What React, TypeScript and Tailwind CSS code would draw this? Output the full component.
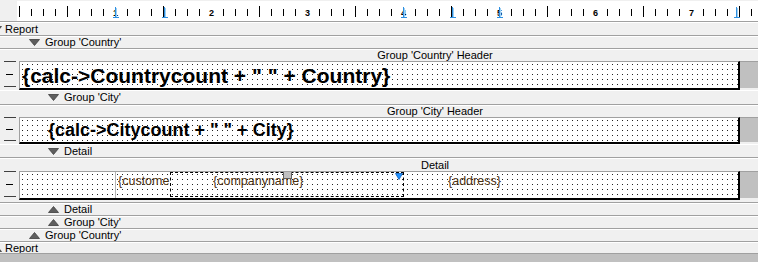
import React from "react";

const markers = [115, 164, 403, 452, 499, 736];

function Ruler() {
  const ticks: React.ReactNode[] = [];
  for (let k = 0; 19 + 12 * k < 758; k++) {
    const x = 19 + 12 * k;
    if (k % 8 === 0 && k > 0) {
      ticks.push(
        <text
          key={k}
          x={x + 0.5}
          y={16}
          textAnchor="middle"
          fontSize="9"
          fontWeight="bold"
          fontFamily="'Liberation Sans', Arial, sans-serif"
          fill="#000"
        >
          {k / 8}
        </text>
      );
    } else if (k % 4 === 0) {
      ticks.push(<rect key={k} x={x} y={6} width={1} height={11} fill="#000" />);
    } else {
      ticks.push(<rect key={k} x={x} y={9} width={1} height={7} fill="#000" />);
    }
  }
  return (
    <svg width="758" height="22" className="block shrink-0" shapeRendering="crispEdges">
      <rect x="0" y="0" width="758" height="22" fill="#f0f0f0" />
      <rect x="17" y="1" width="741" height="20" fill="#fff" />
      <rect x="0" y="21" width="758" height="1" fill="#a0a0a0" />
      {ticks}
      {markers.map((m) => (
        <g key={m}>
          <rect x={m} y={7} width={1} height={10} fill="#2e8fe0" />
          <rect x={m + 1} y={8} width={1} height={9} fill="#9cd0f5" />
          <rect x={m - 2} y={17} width={6} height={1} fill="#2e8fe0" />
        </g>
      ))}
    </svg>
  );
}

function Tri({ up = false }: { up?: boolean }) {
  return (
    <svg width="11" height="7" viewBox="0 0 11 7" className="shrink-0">
      {up ? (
        <polygon points="5.5,0.5 10.5,6.5 0.5,6.5" fill="#5e5e5e" stroke="#3c3c3c" strokeWidth="0.8" />
      ) : (
        <polygon points="0.5,0.5 10.5,0.5 5.5,6.5" fill="#5e5e5e" stroke="#3c3c3c" strokeWidth="0.8" />
      )}
    </svg>
  );
}

function Row({
  h,
  indent,
  up,
  label,
  clipped,
}: {
  h: string;
  indent?: string;
  up?: boolean;
  label: string;
  clipped?: boolean;
}) {
  return (
    <div className={`${h} flex shrink-0 items-center border-t border-white border-b border-b-[#a0a0a0] overflow-hidden leading-none`}>
      {clipped ? (
        <div className="-ml-[9px] flex items-center">
          <Tri up={up} />
        </div>
      ) : (
        <div className={`${indent} flex items-center`}>
          <Tri up={up} />
        </div>
      )}
      <span className={clipped ? "ml-[3px]" : "ml-[5px]"}>{label}</span>
    </div>
  );
}

function Label({ h, text }: { h: string; text: string }) {
  return (
    <div className={`${h} shrink-0 flex items-center justify-center pl-[112px] border-t border-white leading-none`}>
      {text}
    </div>
  );
}

function Gutter() {
  return (
    <div className="w-[19px] shrink-0 flex flex-col items-center justify-between pb-[3px]">
      <div className="h-px w-[12px] bg-[#404040]" />
      <div className="h-px w-[7px] bg-black" />
      <div className="h-px w-[12px] bg-[#404040]" />
    </div>
  );
}

function Band({ h, children }: { h: string; children: React.ReactNode }) {
  return (
    <div className={`${h} shrink-0 flex`}>
      <Gutter />
      <div className="relative flex-1 flex items-center overflow-hidden border-t border-l border-[#a0a0a0] border-b-2 border-b-black border-r-2 border-r-black bg-white bg-[radial-gradient(circle_at_0.5px_0.5px,#222_0.6px,transparent_0.7px)] bg-[length:5px_5px] bg-[position:2px_2px]">
        {children}
      </div>
      <div className="w-[18px] shrink-0 bg-[#c0c0c0] border-t border-[#a0a0a0] mb-[2px]" />
    </div>
  );
}

export default function App() {
  return (
    <div className="w-[758px] h-[262px] overflow-hidden flex flex-col bg-[#f0f0f0] font-['Liberation_Sans',Arial,sans-serif] text-[11px] text-black">
      <Ruler />
      <Row h="h-[14px]" label="Report" clipped />
      <Row h="h-[13px]" indent="ml-[29px]" label="Group 'Country'" />
      <Label h="h-[12px]" text="Group 'Country' Header" />
      <Band h="h-[29px]">
        <span className="pl-[2px] font-bold text-[21px] leading-none whitespace-nowrap">
          {'{calc->Countrycount + " " + Country}'}
        </span>
      </Band>
      <Row h="h-[15px]" indent="ml-[48px]" label="Group 'City'" />
      <Label h="h-[12px]" text="Group 'City' Header" />
      <Band h="h-[27px]">
        <span className="pl-[28px] font-bold text-[18px] leading-none whitespace-nowrap">
          {'{calc->Citycount + " " + City}'}
        </span>
      </Band>
      <Row h="h-[14px]" indent="ml-[48px]" label="Detail" />
      <Label h="h-[13px]" text="Detail" />
      <Band h="h-[29px]">
        <div className="absolute left-[95px] top-0 bottom-0 w-px bg-[#b4b4b4]" />
        <div className="absolute left-[98px] top-[3px] w-[52px] overflow-hidden whitespace-nowrap text-[12.5px] leading-none text-[#4a3010]">
          {"{custome"}
        </div>
        <div className="absolute left-[150px] top-0 w-[234px] h-[25px] border border-dashed border-black">
          <div className="absolute left-[42px] top-[2px] whitespace-nowrap text-[12.5px] leading-none text-[#4a3010]">
            {"{companyname}"}
          </div>
        </div>
        <div className="absolute left-[263px] -top-px w-[9px] h-[8px] bg-[#c0c0c0] border border-[#606060]" />
        <svg width="8" height="7" viewBox="0 0 8 7" className="absolute left-[375px] top-px">
          <polygon points="0.5,0.5 7.5,0.5 4,6.5" fill="#1e90ff" stroke="#0a5fc0" strokeWidth="0.8" />
        </svg>
        <div className="absolute left-[428px] top-[3px] whitespace-nowrap text-[12.5px] leading-none text-[#4a3010]">
          {"{address}"}
        </div>
      </Band>
      <div className="h-[3px] shrink-0 border-b border-[#a0a0a0]" />
      <Row h="h-[13px]" indent="ml-[48px]" up label="Detail" />
      <Row h="h-[13px]" indent="ml-[48px]" up label="Group 'City'" />
      <Row h="h-[13px]" indent="ml-[29px]" up label="Group 'Country'" />
      <Row h="h-[12px]" up label="Report" clipped />
      <div className="flex-1 bg-[#c0c0c0]" />
    </div>
  );
}
